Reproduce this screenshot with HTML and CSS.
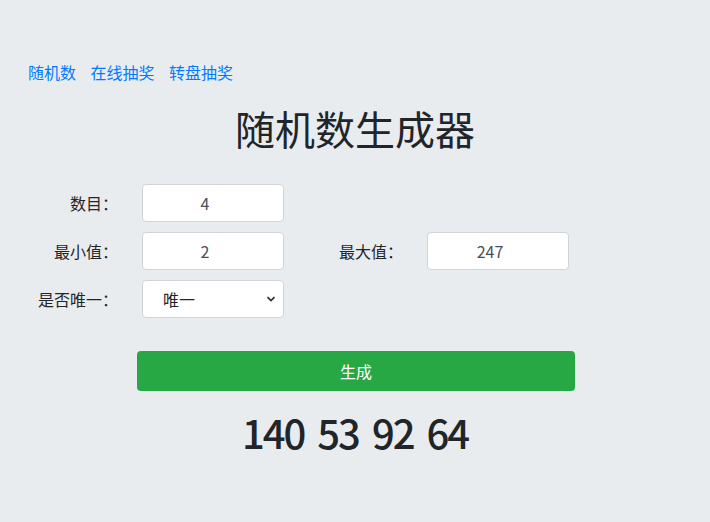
FILE: index.html
```html
<!DOCTYPE html>
<html lang="zh-CN">
<head>
<meta charset="utf-8">
<title>随机数生成器</title>
<link rel="stylesheet" href="styles.css">
</head>
<body>
<nav class="nav">
  <a href="#">随机数</a>
  <a href="#">在线抽奖</a>
  <a href="#">转盘抽奖</a>
</nav>
<h1 class="title">随机数生成器</h1>
<form class="form">
  <label class="label">数目：</label>
  <input class="field" type="text" value="4">
  <span></span><span></span>
  <label class="label">最小值：</label>
  <input class="field" type="text" value="2">
  <label class="label">最大值：</label>
  <input class="field" type="text" value="247">
  <label class="label">是否唯一：</label>
  <select class="select"><option>唯一</option><option>不唯一</option></select>
</form>
<div class="actions">
  <button class="btn" type="button">生成</button>
</div>
<h2 class="result">140 53 92 64</h2>
</body>
</html>
```
FILE: styles.css
```css
html, body {
  margin: 0;
  padding: 0;
}
body {
  background: #e9ecef;
  color: #212529;
  font-family: "Noto Sans CJK SC", "Noto Sans", sans-serif;
  font-size: 16px;
  line-height: 24px;
}
.nav {
  display: flex;
  gap: 14.5px;
  padding: 60px 0 0 28px;
}
.nav a {
  color: #007bff;
  text-decoration: none;
}
.title {
  margin: 20px 0 0;
  text-align: center;
  font-size: 40px;
  line-height: 48px;
  font-weight: 400;
}
.form {
  margin-top: 32px;
  display: grid;
  grid-template-columns: 118px 142px 95px 142px;
  column-gap: 24px;
  row-gap: 10px;
  align-items: center;
}
.label {
  text-align: right;
  white-space: nowrap;
}
.field, .select {
  box-sizing: border-box;
  height: 38px;
  width: 142px;
  border: 1px solid #ced4da;
  border-radius: 4px;
  background: #fff;
  font-family: inherit;
  font-size: 16px;
  color: #495057;
  margin: 0;
}
.field {
  padding: 0 28px 0 12px;
  text-align: center;
}
.select {
  appearance: none;
  -webkit-appearance: none;
  padding: 0 24px 0 20px;
  color: #212529;
  background: #fff url("data:image/svg+xml,%3Csvg xmlns='http://www.w3.org/2000/svg' width='10' height='6' viewBox='0 0 10 6'%3E%3Cpath d='M1.5 1.2 5 4.6 8.5 1.2' fill='none' stroke='%23333' stroke-width='1.8'/%3E%3C/svg%3E") no-repeat right 7px center;
}
.actions {
  margin-top: 33px;
  padding-left: 2px;
  display: flex;
  justify-content: center;
}
.btn {
  width: 438px;
  height: 40px;
  border: 0;
  border-radius: 4px;
  background: #28a745;
  color: #fff;
  font-family: inherit;
  font-size: 16px;
}
.result {
  margin: 17px 0 0;
  text-align: center;
  font-size: 40px;
  line-height: 48px;
  font-weight: 500;
  letter-spacing: -2px;
  word-spacing: 6px;
}
```
